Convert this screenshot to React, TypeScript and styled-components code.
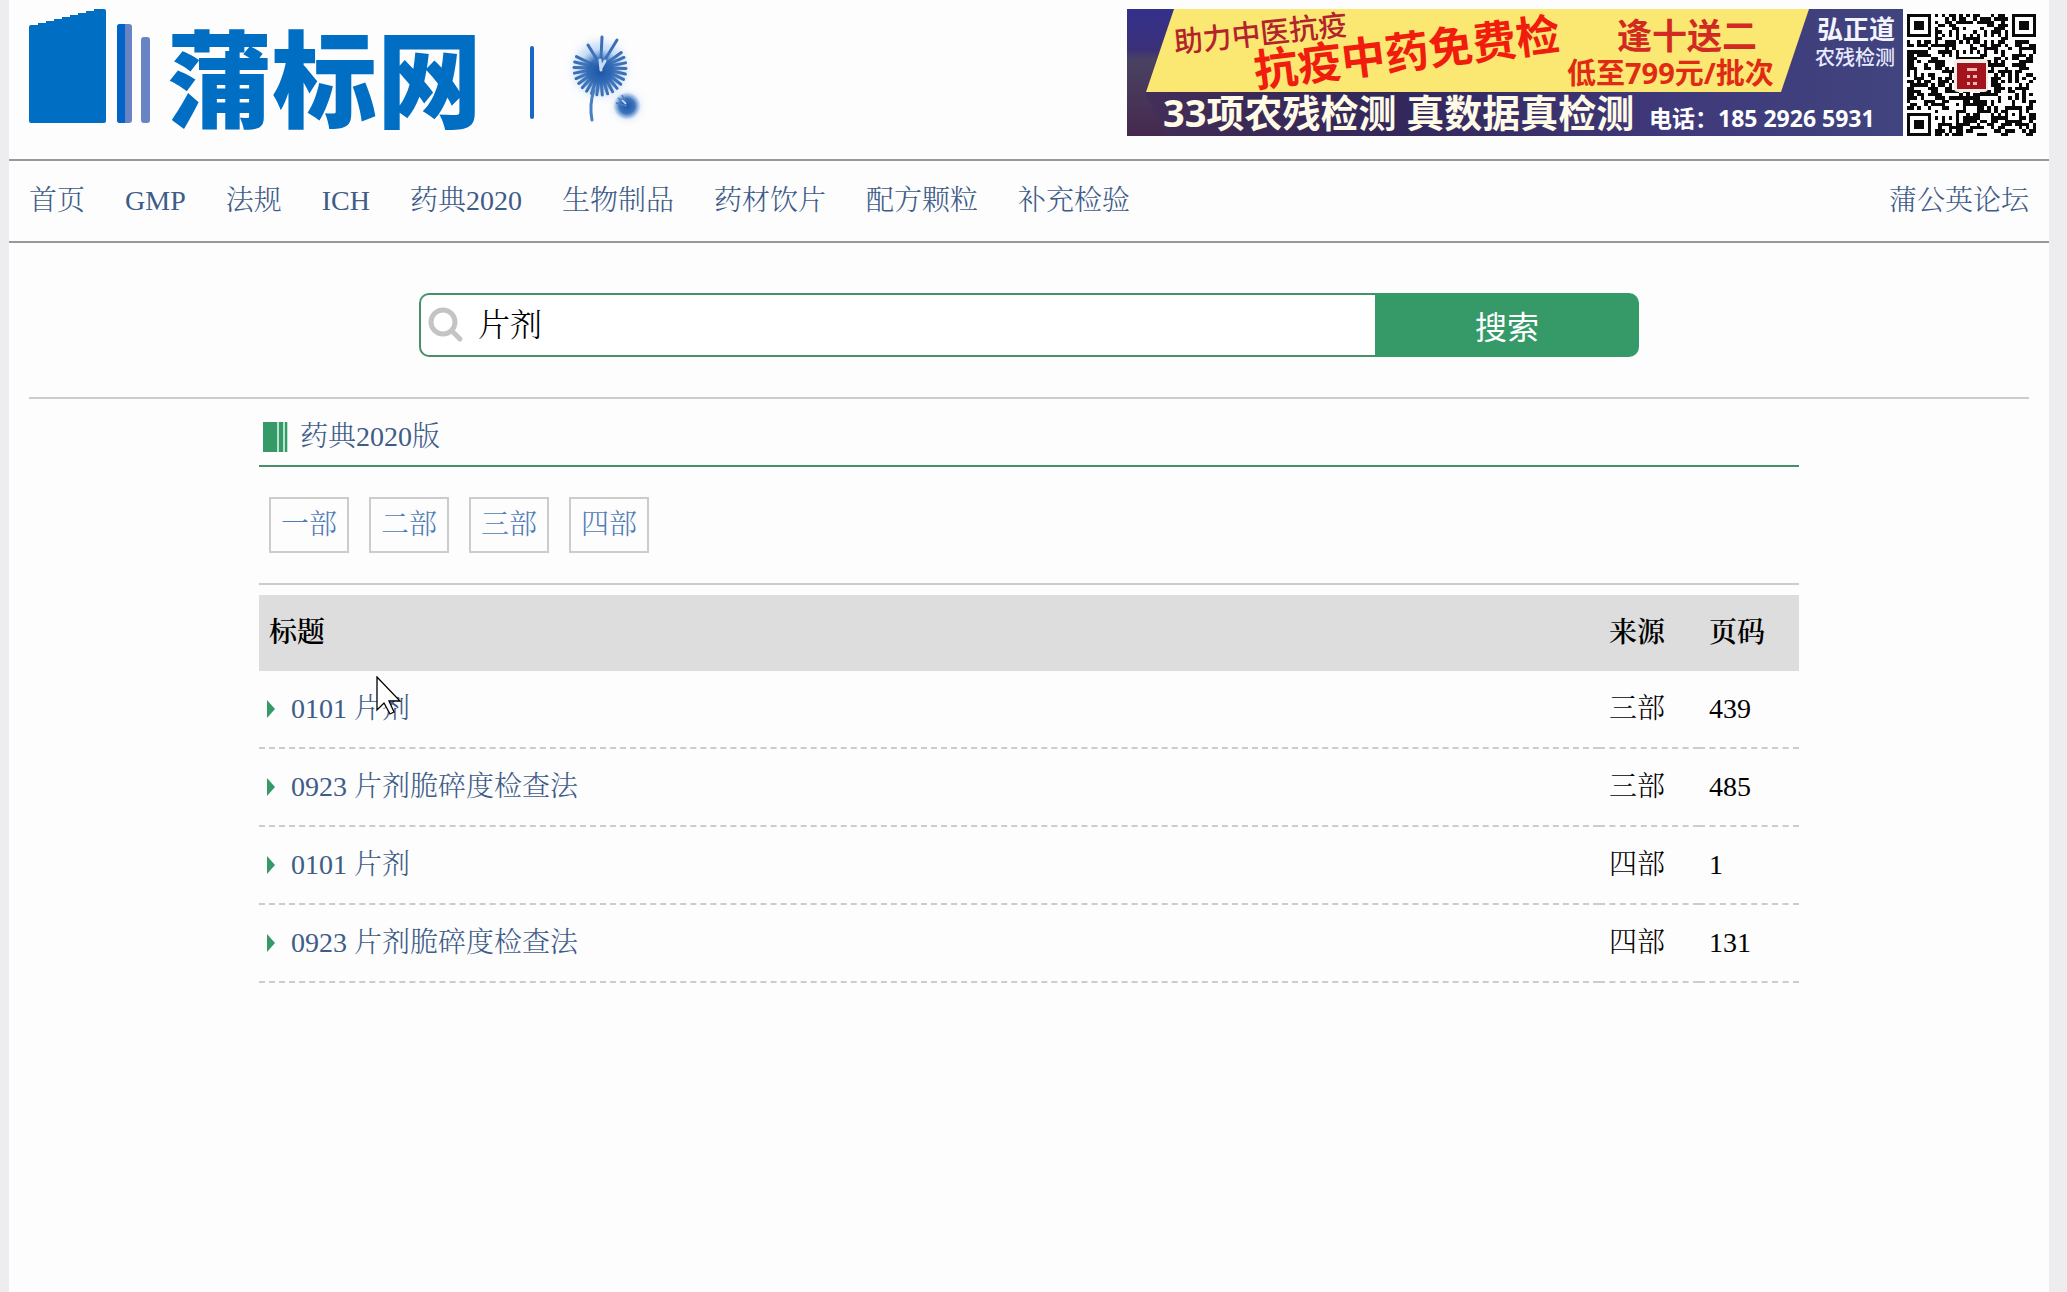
import React from 'react';
import styled, { createGlobalStyle } from 'styled-components';

const serif = '"Liberation Serif", "Noto Serif CJK SC", "Noto Sans CJK SC", serif';
const sans = '"Noto Sans CJK SC", sans-serif';
const green = '#359968';
const line = '#cccccc';
const link = '#3d5c88';

const GlobalStyle = createGlobalStyle`
  * { box-sizing: border-box; }
  body {
    margin: 0;
    background: #ededf0;
    color: #000;
    font: 300 28px/40px ${serif};
  }
  a { color: inherit; text-decoration: none; }
`;

const Page = styled.div`
  position: relative;
  min-height: 100vh;
  margin: 0 18px 0 9px;
  background: #fdfdfd;
`;

const Header = styled.header`
  display: flex;
  justify-content: space-between;
  align-items: flex-start;
  padding: 9px 9px 23px 20px;
`;

const HomeLink = styled.a`
  display: block;
  svg { display: block; overflow: visible; }
`;

const Promo = styled.a`
  display: flex;
  svg { display: block; overflow: visible; }
`;

const Nav = styled.nav`
  display: flex;
  justify-content: space-between;
  align-items: center;
  height: 84px;
  border: solid #999;
  border-width: 2px 0;
  color: ${link};
`;

const NavGroup = styled.div`
  display: flex;
`;

const NavLink = styled.a`
  padding: 0 20px;
`;

const SearchArea = styled.section`
  margin: 0 20px;
  padding: 50px 0 40px;
  border-bottom: 2px solid ${line};
`;

const SearchForm = styled.form`
  display: flex;
  max-width: 1220px;
  height: 64px;
  margin: 0 auto;
`;

const SearchField = styled.label`
  flex: 1;
  display: flex;
  align-items: center;
  gap: 14px;
  padding-left: 7px;
  border: 2px solid #46906c;
  border-right: 0;
  border-radius: 10px 0 0 10px;
  background: #fff;
`;

const SearchInput = styled.input`
  flex: 1;
  min-width: 0;
  height: 56px;
  padding: 0;
  border: 0;
  outline: 0;
  background: transparent;
  color: #000;
  font: 300 32px/56px ${serif};
`;

const SearchButton = styled.button`
  width: 264px;
  padding: 0;
  border: 0;
  border-radius: 0 10px 10px 0;
  background: ${green};
  color: #fff;
  font: 400 32px/64px ${sans};
`;

const Content = styled.main`
  max-width: 1540px;
  margin: 0 auto;
`;

const SectionTitle = styled.h2`
  display: flex;
  align-items: center;
  gap: 12px;
  margin: 0;
  padding: 18px 4px 8px;
  border-bottom: 2px solid #46906c;
  color: ${link};
  font: inherit;
`;

const Volumes = styled.div`
  display: flex;
  gap: 20px;
  margin-bottom: 10px;
  padding: 30px 10px;
  border-bottom: 2px solid ${line};
`;

const VolumeLink = styled.a`
  padding: 6px 10px;
  border: 2px solid ${line};
  color: #4f7cb8;
`;

const Results = styled.table`
  width: 100%;
  border-collapse: separate;
  border-spacing: 0;
  table-layout: fixed;
`;

const HeadCell = styled.th<{ $narrow?: boolean }>`
  width: ${(p) => (p.$narrow ? '100px' : 'auto')};
  padding: 18px 10px;
  background: #ddd;
  text-align: left;
  font-weight: 600;
`;

const Cell = styled.td`
  padding: 18px 10px;
  border-bottom: 2px dashed ${line};
`;

const EntryLink = styled.a`
  display: flex;
  align-items: center;
  gap: 16px;
  margin-left: -2px;
  color: ${link};
`;

const Pointer = styled.svg`
  position: absolute;
  left: 367px;
  top: 676px;
  pointer-events: none;
`;

const PromoText = styled.text<{ $size: number; $weight?: number }>`
  font-family: "Noto Sans", ${sans};
  font-size: ${(p) => p.$size}px;
  font-weight: ${(p) => p.$weight ?? 700};
`;

const BrandText = styled.text`
  font-family: ${sans};
  font-size: 105px;
  font-weight: 900;
`;

function petals(cx: number, cy: number, rx: number, ry: number, step: number) {
  const out: React.ReactNode[] = [];
  for (let a = -35; a <= 215; a += step) {
    const r = (a * Math.PI) / 180;
    out.push(
      <line key={a} x1={cx} y1={cy} x2={cx + rx * Math.cos(r)} y2={cy + ry * Math.sin(r)} />,
    );
  }
  return out;
}

function Logo() {
  return (
    <svg width="640" height="120" viewBox="29 9 640 120" role="img" aria-label="蒲标网">
      <defs>
        <filter id="glow" x="-40%" y="-40%" width="180%" height="180%">
          <feGaussianBlur stdDeviation="4" />
        </filter>
        <radialGradient id="seed">
          <stop offset="0" stopColor="#1d56a8" />
          <stop offset="0.55" stopColor="#2f68b4" stopOpacity="0.9" />
          <stop offset="1" stopColor="#5c8ccc" stopOpacity="0" />
        </radialGradient>
      </defs>
      <path
        d="M29 27Q29 25 31 25H38V23H46V21H54V19H62V17H70V15H78V13H86V11H94V9H104Q106 9 106 11V121Q106 123 104 123H31Q29 123 29 121Z"
        fill="#006ec3"
      />
      <rect x="117" y="24" width="15" height="99" rx="3" fill="#6884c4" />
      <path d="M125 24H120Q117 24 117 27V120Q117 123 120 123H125Z" fill="#0364c8" />
      <rect x="141" y="37" width="9" height="86" rx="3" fill="#6884c4" />
      <BrandText x="167" y="119" fill="#006ec3">蒲标网</BrandText>
      <rect x="530" y="46" width="4" height="73" rx="2" fill="#1668c4" />
      <ellipse cx="600" cy="69" rx="26" ry="27" fill="#9dc4f2" opacity="0.6" filter="url(#glow)" />
      <g stroke="#3a6fb5" strokeWidth="3" strokeLinecap="round">
        {petals(600, 68, 26, 27, 12)}
        <line x1="601" y1="58" x2="602" y2="37" />
        <line x1="606" y1="58" x2="617" y2="40" />
        <line x1="596" y1="58" x2="588" y2="45" />
      </g>
      <circle cx="600" cy="71" r="22" fill="url(#seed)" />
      <path d="M601 70L600 60M601 68L605 61" stroke="#c4dcf6" strokeWidth="3" strokeLinecap="round" />
      <path d="M594 90Q589 105 592 120" fill="none" stroke="#4a7fc0" strokeWidth="3" strokeLinecap="round" />
      <circle cx="627" cy="106" r="12" fill="#9dc4f2" opacity="0.6" filter="url(#glow)" />
      <circle cx="627" cy="106" r="14" fill="url(#seed)" />
      <path d="M627 106L616 103M626 104L618 98M626 103L622 95" stroke="#4a7fc0" strokeWidth="1.5" />
      <path d="M626 104L622 100" stroke="#d5e6f8" strokeWidth="1.5" />
    </svg>
  );
}

function Banner() {
  return (
    <svg width="776" height="127" viewBox="0 0 776 127" role="img" aria-label="抗疫中药免费检">
      <defs>
        <linearGradient id="night" x1="0" x2="1" y1="0" y2="0">
          <stop offset="0" stopColor="#45305c" />
          <stop offset="0.12" stopColor="#3d2a55" />
          <stop offset="0.35" stopColor="#33285c" />
          <stop offset="0.7" stopColor="#40397a" />
          <stop offset="1" stopColor="#40447f" />
        </linearGradient>
        <linearGradient id="dusk" x1="0" x2="0" y1="0" y2="1">
          <stop offset="0" stopColor="#33308c" />
          <stop offset="0.32" stopColor="#3b3078" />
          <stop offset="0.4" stopColor="#4a4262" />
          <stop offset="1" stopColor="#45294f" />
        </linearGradient>
      </defs>
      <rect width="776" height="127" fill="url(#night)" />
      <path d="M0 0H47L18 84L40 127H0Z" fill="url(#dusk)" />
      <path d="M47 0H682L654 83H19Z" fill="#fbe873" />
      <PromoText $size={29} x="48" y="44" fill="#b3232c" $weight={500} transform="rotate(-6 48 44)">助力中医抗疫</PromoText>
      <PromoText $size={44} x="129" y="78" fill="#f01d0e" transform="rotate(-7 129 78)">抗疫中药免费检</PromoText>
      <PromoText $size={35} x="490" y="40" fill="#d12a22">逢十送二</PromoText>
      <PromoText $size={29} x="440" y="75" fill="#e02a14">低至799元/批次</PromoText>
      <PromoText $size={38} x="36" y="118" fill="#fffbe6">33项农残检测 真数据真检测</PromoText>
      <PromoText $size={26} x="690" y="30" fill="#f3f4ff">弘正道</PromoText>
      <PromoText $size={20} x="688" y="56" fill="#e8eaff" $weight={500}>农残检测</PromoText>
      <PromoText $size={23} x="522" y="118" fill="#fff">电话：185 2926 5931</PromoText>
    </svg>
  );
}

const QR_SIZE = 37;

function qrPath() {
  let seed = 20201;
  const next = () => {
    seed = (seed * 1103515245 + 12345) % 2147483648;
    return seed / 2147483648;
  };
  const finder = (x: number, y: number) => {
    const ring = Math.max(Math.abs(x - 3), Math.abs(y - 3));
    return ring === 3 || ring <= 1;
  };
  let d = '';
  for (let y = 0; y < QR_SIZE; y++) {
    for (let x = 0; x < QR_SIZE; x++) {
      let on = next() > 0.5;
      const far = QR_SIZE - 8;
      if (x < 8 && y < 8) on = x < 7 && y < 7 && finder(x, y);
      else if (x >= far && y < 8) on = x > far && y < 7 && finder(x - far - 1, y);
      else if (x < 8 && y >= far) on = x < 7 && y > far && finder(x, y - far - 1);
      else if (Math.abs(x - 30) < 3 && Math.abs(y - 30) < 3) {
        on = Math.max(Math.abs(x - 30), Math.abs(y - 30)) !== 1;
      } else if (y === 6) on = x % 2 === 0;
      else if (x === 6) on = y % 2 === 0;
      if (on) d += `M${x} ${y}h1v1h-1z`;
    }
  }
  return d;
}

function QrCode() {
  return (
    <svg width="137" height="127" viewBox="0 0 137 127" role="img" aria-label="QR">
      <rect width="137" height="127" fill="#fff" />
      <svg x="4" y="5" width="129" height="122" viewBox="0 0 37 37" preserveAspectRatio="none">
        <path d={qrPath()} fill="#0a0a0a" shapeRendering="crispEdges" />
      </svg>
      <rect x="51" y="50" width="34" height="33" rx="4" fill="#f4ece6" />
      <rect x="54" y="54" width="29" height="26" fill="#a3141d" />
      <g fill="#f0b8b4">
        <rect x="64" y="59" width="10" height="3" />
        <rect x="64" y="66" width="3" height="3" />
        <rect x="70" y="66" width="4" height="3" />
        <rect x="64" y="73" width="3" height="3" />
        <rect x="70" y="73" width="4" height="3" />
      </g>
    </svg>
  );
}

const navItems = ['首页', 'GMP', '法规', 'ICH', '药典2020', '生物制品', '药材饮片', '配方颗粒', '补充检验'];
const volumes = ['一部', '二部', '三部', '四部'];
const results = [
  { title: '0101 片剂', source: '三部', page: '439' },
  { title: '0923 片剂脆碎度检查法', source: '三部', page: '485' },
  { title: '0101 片剂', source: '四部', page: '1' },
  { title: '0923 片剂脆碎度检查法', source: '四部', page: '131' },
];

export default function App() {
  return (
    <>
      <GlobalStyle />
      <Page>
        <Header>
          <HomeLink href="#home"><Logo /></HomeLink>
          <Promo href="#promo">
            <Banner />
            <QrCode />
          </Promo>
        </Header>
        <Nav>
          <NavGroup>
            {navItems.map((item) => (
              <NavLink key={item} href="#nav">{item}</NavLink>
            ))}
          </NavGroup>
          <NavLink href="#forum">蒲公英论坛</NavLink>
        </Nav>
        <SearchArea>
          <SearchForm onSubmit={(e) => e.preventDefault()}>
            <SearchField>
              <svg width="36" height="36" viewBox="0 0 36 36" fill="none" stroke="#c4c4c6" aria-hidden="true">
                <circle cx="15" cy="15" r="12" strokeWidth="5" />
                <path d="M24 24L32 32" strokeWidth="5" strokeLinecap="round" />
              </svg>
              <SearchInput type="text" defaultValue="片剂" aria-label="搜索" />
            </SearchField>
            <SearchButton type="submit">搜索</SearchButton>
          </SearchForm>
        </SearchArea>
        <Content>
          <SectionTitle>
            <svg width="25" height="30" viewBox="0 0 25 30" aria-hidden="true">
              <rect width="25" height="30" fill="#b9e3cd" />
              <rect width="14" height="30" fill={green} />
              <rect x="16" width="4" height="30" fill={green} />
              <rect x="22" width="2" height="30" fill={green} />
            </svg>
            <a href="#pharmacopoeia">药典2020版</a>
          </SectionTitle>
          <Volumes>
            {volumes.map((v) => (
              <VolumeLink key={v} href="#volume">{v}</VolumeLink>
            ))}
          </Volumes>
          <Results>
            <thead>
              <tr>
                <HeadCell>标题</HeadCell>
                <HeadCell $narrow>来源</HeadCell>
                <HeadCell $narrow>页码</HeadCell>
              </tr>
            </thead>
            <tbody>
              {results.map((r) => (
                <tr key={r.source + r.title}>
                  <Cell>
                    <EntryLink href="#entry">
                      <svg width="8" height="18" viewBox="0 0 8 18" aria-hidden="true">
                        <path d="M0 0L8 9L0 18Z" fill={green} />
                      </svg>
                      {r.title}
                    </EntryLink>
                  </Cell>
                  <Cell>{r.source}</Cell>
                  <Cell>{r.page}</Cell>
                </tr>
              ))}
            </tbody>
          </Results>
        </Content>
        <Pointer width="26" height="40" viewBox="0 0 26 40" aria-hidden="true">
          <path d="M1 1V34L8 27L14 38L18 36L13 25H24Z" fill="#fff" stroke="#000" strokeWidth="1.3" />
        </Pointer>
      </Page>
    </>
  );
}
